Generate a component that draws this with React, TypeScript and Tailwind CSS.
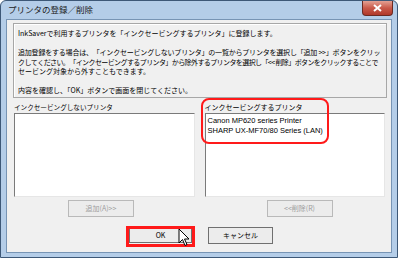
import React from 'react';

const jp = { fontFamily: '"Noto Sans CJK JP", "Liberation Sans", sans-serif' };

function WinButton({ label, disabled, className = '' }: { label: string; disabled?: boolean; className?: string }) {
  return (
    <div
      className={`flex items-center justify-center border bg-[#ececec] text-[7px] ${
        disabled ? 'border-[#b9b9b9] text-[#9d9d9d]' : 'border-[#707070] text-black'
      } ${className}`}
    >
      {label}
    </div>
  );
}

// spreads one line of text evenly across a fixed width, like the dialog's wrapped lines
function SpreadLine({ text, className = '' }: { text: string; className?: string }) {
  return (
    <div className={`flex justify-between tracking-[-0.6px] ${className}`}>
      {Array.from(text).map((ch, i) => (
        <span key={i} className="whitespace-pre">{ch}</span>
      ))}
    </div>
  );
}

export default function App() {
  return (
    <div className="w-[400px] h-[260px] bg-white" style={jp}>
      <div className="relative w-[398px] h-[258px] rounded-t-[6px] border border-[#3d5877] bg-[#b4cde8] flex flex-col px-[5px] pb-[4px]">
        {/* title bar */}
        <div className="h-[18px] flex items-start justify-between shrink-0">
          <span className="mt-[2px] ml-[2px] text-[8.5px] leading-[12px] text-[#1b1b1b]">プリンタの登録／削除</span>
          <div className="mr-[-1px] w-[31px] h-[15px] rounded-b-[4px] border border-t-0 border-[#6b2a22] bg-gradient-to-b from-[#e3a093] via-[#c9594a] to-[#b0382a] flex items-center justify-center">
            <svg width="9" height="8" viewBox="0 0 9 8">
              <path d="M1 1 L8 7 M8 1 L1 7" stroke="#fff" strokeWidth="2" />
            </svg>
          </div>
        </div>

        {/* client area */}
        <div className="flex-1 border border-[#7794b4] bg-[#f0f0f0] flex flex-col pt-[3px] px-[6px]">
          <div className="w-[374px] h-[75px] overflow-hidden border border-[#a7a7a7] shadow-[inset_1px_1px_0_#fff] px-[4px] pt-[5px] text-[7px] leading-[9.5px] text-black whitespace-nowrap">
            <p>InkSaverで利用するプリンタを「インクセービングするプリンタ」に登録します。</p>
            <SpreadLine
              className="mt-[9.5px] w-[362px]"
              text="追加登録をする場合は、「インクセービングしないプリンタ」の一覧からプリンタを選択し「追加 >>」ボタンをクリッ"
            />
            <SpreadLine
              className="w-[359px]"
              text="クしてください。「インクセービングするプリンタ」から除外するプリンタを選択し「<< 削除」ボタンをクリックすることで"
            />
            <p>セービング対象から外すこともできます。</p>
            <p className="mt-[9.5px]">内容を確認し、「OK」ボタンで画面を閉じてください。</p>
          </div>

          <div className="mt-[3px] flex gap-[10px] pl-[1px]">
            <div className="w-[181px] flex flex-col">
              <div className="h-[12px] text-[6.6px] leading-[12px]">インクセービングしないプリンタ</div>
              <div className="h-[84px] border border-t-[#7a7a7a] border-l-[#7a7a7a] border-r-[#e6e6e6] border-b-[#e6e6e6] bg-white" />
              <WinButton label="追加(A)>>" disabled className="mt-[3px] ml-[54px] w-[66px] h-[17px]" />
            </div>
            <div className="w-[181px] flex flex-col">
              <div className="h-[12px] text-[7px] leading-[12px]">インクセービングするプリンタ</div>
              <div
                className="h-[84px] border border-t-[#7a7a7a] border-l-[#7a7a7a] border-r-[#e6e6e6] border-b-[#e6e6e6] bg-white px-[2px] pt-[2px] text-[7.5px] leading-[10px]"
                style={{ fontFamily: '"Liberation Sans", "Noto Sans CJK JP", sans-serif' }}
              >
                <div>Canon MP620 series Printer</div>
                <div>SHARP UX-MF70/80 Series (LAN)</div>
              </div>
              <WinButton label="<<削除(R)" disabled className="mt-[3px] ml-[62px] w-[66px] h-[17px]" />
            </div>
          </div>

          <div className="mt-[10px] flex gap-[16px] pl-[116px]">
            <WinButton label="OK" className="w-[63px] h-[16px]" />
            <WinButton label="キャンセル" className="w-[65px] h-[17px]" />
          </div>
        </div>

        {/* annotations */}
        <div className="absolute left-[200px] top-[97px] w-[128px] h-[46px] rounded-[8px] border-2 border-[#ff1a1a]" />
        <div className="absolute left-[125px] top-[225px] w-[69px] h-[21px] border-[3px] border-[#ff1a1a]" />
        <svg className="absolute left-[177px] top-[227px]" width="12" height="19" viewBox="0 0 12 19">
          <path d="M1 1 L1 15 L4.5 11.5 L7 17.5 L9 16.5 L6.5 11 L11 11 Z" fill="#fff" stroke="#000" strokeWidth="1" strokeLinejoin="round" />
        </svg>
      </div>
    </div>
  );
}
